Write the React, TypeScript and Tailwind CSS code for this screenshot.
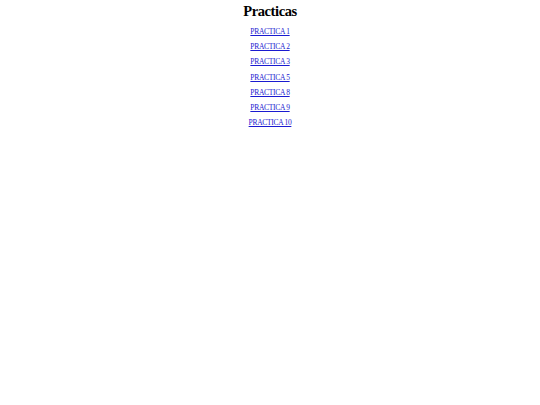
export default function App() {
  const links = ["PRACTICA 1", "PRACTICA 2", "PRACTICA 3", "PRACTICA 5", "PRACTICA 8", "PRACTICA 9", "PRACTICA 10"];

  return (
    <div className="min-h-[405px] w-full bg-white text-center font-['Liberation_Serif',serif] text-black">
      <h1 className="pt-[1px] text-[14.5px] font-bold leading-[20px] tracking-[-0.4px]">Practicas</h1>
      <div className="mt-[3px] flex flex-col items-center">
        {links.map((l) => (
          <a key={l} href="#" className="text-[7.5px] leading-[15.2px] tracking-[-0.3px] text-[#1a1ad0] underline">
            {l}
          </a>
        ))}
      </div>
    </div>
  );
}
